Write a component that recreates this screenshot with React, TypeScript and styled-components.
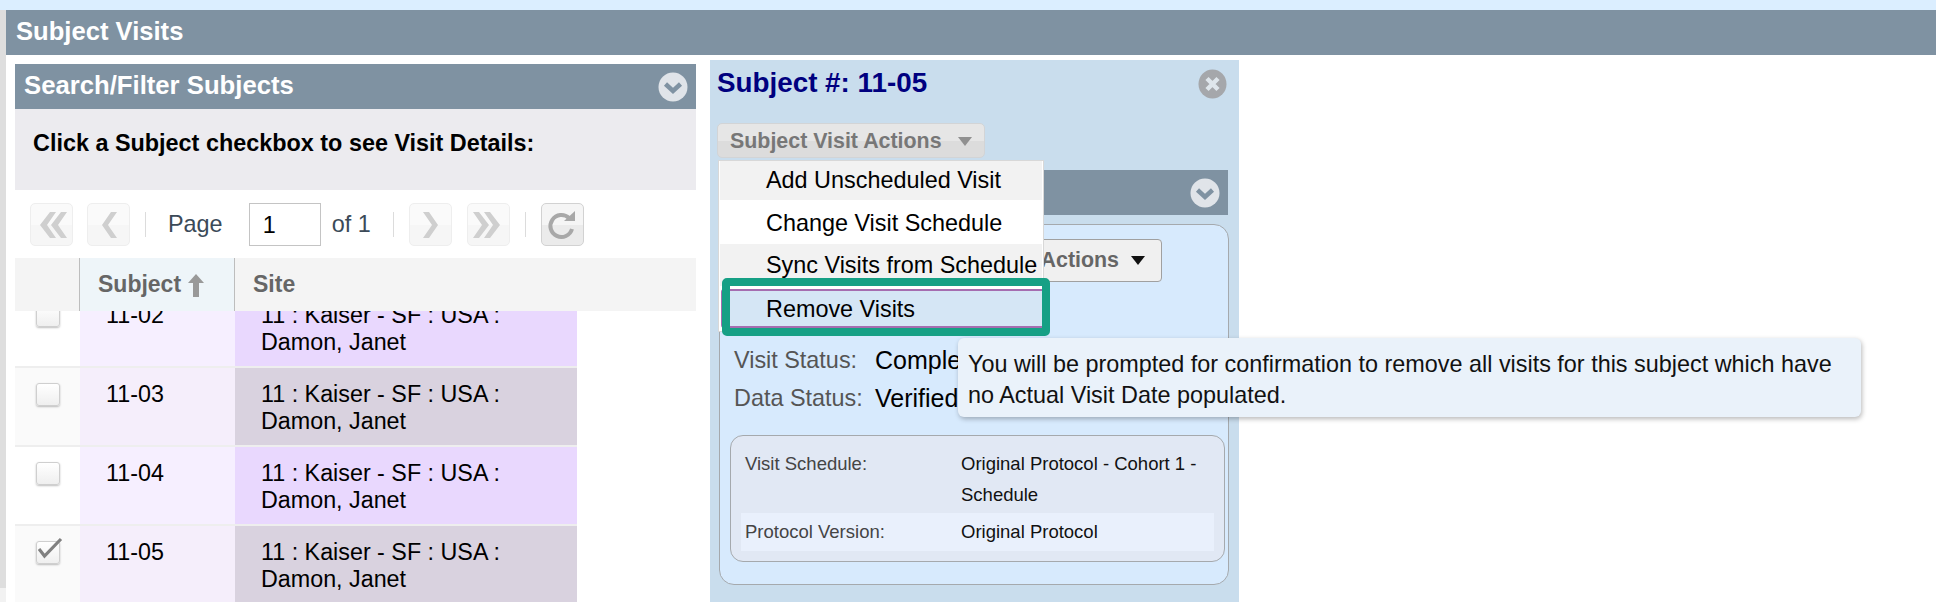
import React from "react";
import styled, { createGlobalStyle } from "styled-components";

const Global = createGlobalStyle`
  html, body { margin: 0; padding: 0; background: #fff; height: 602px; overflow: hidden; }
  body { font-family: "Liberation Sans", Arial, sans-serif; color: #000; }
  * { box-sizing: border-box; }
`;

const Page = styled.div`display: flex; flex-direction: column; height: 602px; overflow: hidden;`;
const TopBand = styled.div`height: 10px; flex: none; background: #dbeeff;`;
const Frame = styled.div`display: flex; flex: 1; min-height: 0;`;
const LeftStrip = styled.div`width: 6px; flex: none; background: linear-gradient(#dedede 578px, #f2f2f2 578px);`;
const Content = styled.div`flex: 1; min-width: 0; display: flex; flex-direction: column;`;
const PageHeader = styled.h1`
  margin: 0; height: 45px; flex: none; background: #7f92a2; color: #fff;
  font-size: 25.6px; font-weight: 700; line-height: 42px; padding-left: 10px;
`;
const Columns = styled.div`display: flex; align-items: flex-start; gap: 14px; padding: 5px 0 0 9px; flex: 1; min-height: 0;`;
const LeftColumn = styled.section`width: 681px; flex: none; margin-top: 4px;`;
const BarHeader = styled.div`
  height: 45px; background: #7f92a2; display: flex; align-items: center; justify-content: space-between;
`;
const BarTitle = styled.h2`margin: 0 0 2px; color: #fff; font-size: 25.7px; font-weight: 700; padding-left: 9px;`;
const FoldIcon = styled.svg`width: 30px; height: 30px; margin-right: 8px; flex: none;`;
const Prompt = styled.div`
  height: 81px; background: #ecebef; font-size: 23.4px; font-weight: 700; line-height: 27px; padding: 21px 0 0 18px;
`;
const Toolbar = styled.div`height: 68px; display: flex; align-items: flex-start; padding: 13px 0 0 15px; color: #3b4a58; font-size: 23.4px;`;
const ToolButton = styled.button<{ $active?: boolean; $left?: number }>`
  width: 43px; height: 43px; padding: 0; margin-left: ${p => p.$left ?? 0}px; flex: none; border-radius: 5px;
  display: flex; align-items: center; justify-content: center;
  border: 1px solid ${p => (p.$active ? "#d2d2d2" : "#eeeeee")};
  background: ${p => (p.$active ? "linear-gradient(#f5f5f5 50%, #ebebeb 50%)" : "linear-gradient(#fafafa 50%, #f6f6f6 50%)")};
`;
const ToolSep = styled.span<{ $left: number }>`width: 1px; height: 25px; margin: 9px 0 0 ${p => p.$left}px; background: #dcdcdc; flex: none;`;
const ToolLabel = styled.span<{ $left: number }>`margin-left: ${p => p.$left}px; line-height: 43px; flex: none;`;
const PageInput = styled.div`
  width: 72px; height: 43px; margin-left: 26px; border: 1px solid #c4c4c4; color: #000; padding-left: 13px; line-height: 43px; flex: none;
`;
const Table = styled.div`height: 344px; overflow: hidden;`;
const HeadRow = styled.div`
  position: relative; z-index: 1; height: 53px; background: #f4f4f4; display: grid; grid-template-columns: 64px 156px 1fr;
  color: #666; font-weight: 700; font-size: 23px; line-height: 51px;
`;
const HeadCell = styled.div<{ $sorted?: boolean; $pad?: number }>`
  display: flex; align-items: center; padding-left: ${p => p.$pad ?? 0}px;
  ${p => p.$sorted && "background: #eef5f9; border-left: 1px solid #bdbdbd; border-right: 1px solid #bdbdbd; gap: 6px;"}
`;
const Rows = styled.div`margin-top: -22px;`;
const Row = styled.div<{ $even?: boolean }>`
  width: 562px; height: 79px; display: grid; grid-template-columns: 65px 155px 342px; border-bottom: 2px solid #eeeeee;
  font-size: 23.3px; line-height: 27px;
  background: ${p => (p.$even ? "#fafafa" : "#fff")};
`;
const CheckCell = styled.div`padding: 15px 0 0 21px;`;
const Check = styled.div`
  position: relative; width: 24px; height: 23px; border-radius: 3px; border: 1px solid #cfcfcf;
  background: linear-gradient(#ffffff, #efefef); box-shadow: 0 1px 2px rgba(0,0,0,.25);
`;
const CheckMark = styled.svg`position: absolute; left: 1px; top: -6px; width: 26px; height: 26px;`;
const SubjectCell = styled.div<{ $even?: boolean }>`
  padding: 13px 0 0 26px; background: ${p => (p.$even ? "#f5eefb" : "#f6efff")};
`;
const SiteCell = styled.div<{ $even?: boolean }>`
  padding: 13px 0 0 26px; background: ${p => (p.$even ? "#d9d2df" : "#e9d8fe")};
`;
const RightPanel = styled.section`width: 529px; flex: none; height: 560px; background: #c9dded; padding: 0 8px 0 8px; position: relative;`;
const TitleRow = styled.div`height: 63px; display: flex; align-items: flex-start; justify-content: space-between; padding-top: 7px;`;
const Title = styled.h2`margin: 0 0 0 -1px; color: #00007f; font-size: 27.8px; line-height: 32px; font-weight: 700;`;
const CloseIcon = styled.svg`width: 29px; height: 30px; margin: 2px 4px 0 0; flex: none;`;
const Dropdown = styled.div`height: 47px; position: relative; z-index: 3;`;
const ActionButton = styled.div`
  width: 268px; height: 35px; margin-left: -1px; border: 1px solid #d2d4d6; border-radius: 5px;
  background: linear-gradient(#e6e6e6 50%, #dcdcdc 50%); color: #777; font-size: 21.4px; font-weight: 700; line-height: 35px;
  display: flex; align-items: center; gap: 16px; padding: 1px 0 0 12px;
`;
const Menu = styled.ul`
  position: absolute; left: 0; top: 37px; width: 326px; height: 172px; margin: 0; padding: 0 1px; list-style: none;
  background: #fff; border: 1px solid #d8d8d8; font-size: 23.4px; line-height: 27px;
`;
const MenuItem = styled.li<{ $shade?: boolean; $h: number; $nudge?: boolean }>`
  height: ${p => p.$h}px; padding: ${p => (p.$nudge ? "2px" : "0")} 0 0 46px; display: flex; align-items: center;
  background: ${p => (p.$shade ? "#f2f2f2" : "#fff")};
`;
const HotItem = styled(MenuItem)`
  position: relative; margin-top: 3px; border: 2.5px solid #a56db0; border-radius: 3px; background: #d5e6f5; margin-left: 1px; width: 326px; padding-left: 43px;
`;
const Callout = styled.span`
  position: absolute; left: -1.5px; top: -13.5px; width: 328px; height: 58px; border: 8px solid #16a085; border-radius: 5px;
`;
const SectionBar = styled(BarHeader)`width: 510px;`;
const Inner = styled.div`
  width: 510px; height: 361px; margin: 9px 0 0 1px; border: 1px solid #a5a9ad; border-radius: 15px; background: #d7eafd; padding: 14px 12px 0;
`;
const VisitActions = styled.div`
  width: 427px; height: 43px; margin-left: 3px; border: 1px solid #a0a0a0; border-radius: 4px; background: #f0f0f0; color: #666;
  font-size: 21.4px; font-weight: 700; display: flex; align-items: center; justify-content: flex-end; gap: 12px; padding-right: 16px;
`;
const Triangle = styled.span<{ $c: string; $w: number }>`
  width: 0; height: 0; flex: none; border-left: ${p => p.$w}px solid transparent; border-right: ${p => p.$w}px solid transparent;
  border-top: ${p => p.$w + 2}px solid ${p => p.$c};
`;
const StatusList = styled.div`margin-top: 65px; display: grid; grid-template-columns: 143px 1fr; row-gap: 11px; font-size: 23.4px; line-height: 27px;`;
const StatusLabel = styled.span`color: #555; padding-left: 2px;`;
const StatusValue = styled.span`font-size: 25px;`;
const DetailBox = styled.div`
  width: 495px; height: 127px; margin: 23px 0 0 -2px; border: 1px solid #a5a9ad; border-radius: 13px; background: #e1e8f4; padding: 12px 10px 0; font-size: 18.5px; line-height: 31px;
`;
const DetailRow = styled.div<{ $band?: boolean }>`
  display: grid; grid-template-columns: 216px 1fr; padding: ${p => (p.$band ? "3px 4px 4px 4px" : "0 4px 3px 4px")};
  ${p => p.$band && "background: #e9f0fc;"}
`;
const DetailLabel = styled.span`color: #444;`;
const DetailValue = styled.span`color: #111; width: 245px;`;
const Tip = styled.div`
  position: absolute; left: 248px; top: 278px; width: 903px; height: 79px; z-index: 4; background: #eaf2fa; border-radius: 6px; padding: 11px 10px 0;
  box-shadow: 1px 2px 5px rgba(0,0,0,.28); font-size: 23.4px; line-height: 31px; color: #111;
`;

const Fold = () => (
  <FoldIcon viewBox="0 0 30 30">
    <circle cx="15" cy="15" r="14.5" fill="#e0e4e9" />
    <path d="M7.5 12 L15 19 L22.5 12" fill="none" stroke="#7f92a2" strokeWidth="4.5" />
  </FoldIcon>
);

const Glyph = ({ d }: { d: string }) => (
  <svg width="32" height="32" viewBox="0 0 32 32"><path d={d} fill="#cfcfcf" /></svg>
);

const rows = [
  { id: "11-02" }, { id: "11-03", even: true }, { id: "11-04" }, { id: "11-05", even: true, checked: true },
];

export default function App() {
  return (
    <Page>
      <Global />
      <TopBand />
      <Frame>
        <LeftStrip />
        <Content>
          <PageHeader>Subject Visits</PageHeader>
          <Columns>
            <LeftColumn>
              <BarHeader><BarTitle>Search/Filter Subjects</BarTitle><Fold /></BarHeader>
              <Prompt>Click a Subject checkbox to see Visit Details:</Prompt>
              <Toolbar>
                <ToolButton><Glyph d="M14 3 L20 3 L11 16 L20 29 L14 29 L4 16 Z M25 3 L31 3 L22 16 L31 29 L25 29 L15 16 Z" /></ToolButton>
                <ToolButton $left={14}><Glyph d="M18 3 L24 3 L15 16 L24 29 L18 29 L9 16 Z" /></ToolButton>
                <ToolSep $left={15} />
                <ToolLabel $left={22}>Page</ToolLabel>
                <PageInput>1</PageInput>
                <ToolLabel $left={11}>of 1</ToolLabel>
                <ToolSep $left={22} />
                <ToolButton $left={15}><Glyph d="M9 3 L15 3 L24 16 L15 29 L9 29 L18 16 Z" /></ToolButton>
                <ToolButton $left={15}><Glyph d="M1 3 L7 3 L17 16 L7 29 L1 29 L10 16 Z M12 3 L18 3 L28 16 L18 29 L12 29 L21 16 Z" /></ToolButton>
                <ToolSep $left={15} />
                <ToolButton $active $left={15}>
                  <svg width="32" height="32" viewBox="0 0 32 32">
                    <path d="M23 9 A11 11 0 1 0 26 20" fill="none" stroke="#a8a8a8" strokeWidth="4" />
                    <path d="M18 12 L29 12 L29 2 Z" fill="#a8a8a8" />
                  </svg>
                </ToolButton>
              </Toolbar>
              <Table>
                <HeadRow>
                  <HeadCell />
                  <HeadCell $sorted $pad={18}>
                    Subject
                    <svg width="18" height="26" viewBox="0 0 18 26"><path d="M9 2 L17 11 L12 11 L12 25 L6 25 L6 11 L1 11 Z" fill="#999" /></svg>
                  </HeadCell>
                  <HeadCell $pad={18}>Site</HeadCell>
                </HeadRow>
                <Rows>
                  {rows.map(r => (
                    <Row key={r.id} $even={r.even}>
                      <CheckCell>
                        <Check>
                          {r.checked && (
                            <CheckMark viewBox="0 0 26 26"><path d="M1 13 L6.5 20 L23 3" fill="none" stroke="#808080" strokeWidth="3.2" /></CheckMark>
                          )}
                        </Check>
                      </CheckCell>
                      <SubjectCell $even={r.even}>{r.id}</SubjectCell>
                      <SiteCell $even={r.even}>11 : Kaiser - SF : USA :<br />Damon, Janet</SiteCell>
                    </Row>
                  ))}
                </Rows>
              </Table>
            </LeftColumn>
            <RightPanel>
              <TitleRow>
                <Title>Subject #: 11-05</Title>
                <CloseIcon viewBox="0 0 29 30">
                  <ellipse cx="14.5" cy="15" rx="14" ry="14.5" fill="#a5a7ab" />
                  <path d="M9 9.5 L20 20.5 M20 9.5 L9 20.5" stroke="#dfe6ec" strokeWidth="4.5" />
                </CloseIcon>
              </TitleRow>
              <Dropdown>
                <ActionButton>Subject Visit Actions <Triangle $c="#909090" $w={7} /></ActionButton>
                <Menu>
                  <MenuItem $shade $h={39}>Add Unscheduled Visit</MenuItem>
                  <MenuItem $h={44} $nudge>Change Visit Schedule</MenuItem>
                  <MenuItem $shade $h={42}>Sync Visits from Schedule</MenuItem>
                  <HotItem $h={39} $nudge>Remove Visits<Callout /></HotItem>
                </Menu>
              </Dropdown>
              <SectionBar><BarTitle>Visit Details</BarTitle><Fold /></SectionBar>
              <Inner>
                <VisitActions>Visit Actions <Triangle $c="#111" $w={7} /></VisitActions>
                <StatusList>
                  <StatusLabel>Visit Status:</StatusLabel><StatusValue>Completed</StatusValue>
                  <StatusLabel>Data Status:</StatusLabel><StatusValue>Verified</StatusValue>
                </StatusList>
                <DetailBox>
                  <DetailRow>
                    <DetailLabel>Visit Schedule:</DetailLabel>
                    <DetailValue>Original Protocol - Cohort 1 - Schedule</DetailValue>
                  </DetailRow>
                  <DetailRow $band>
                    <DetailLabel>Protocol Version:</DetailLabel>
                    <DetailValue>Original Protocol</DetailValue>
                  </DetailRow>
                </DetailBox>
              </Inner>
              <Tip>You will be prompted for confirmation to remove all visits for this subject which have no Actual Visit Date populated.</Tip>
            </RightPanel>
          </Columns>
        </Content>
      </Frame>
    </Page>
  );
}
